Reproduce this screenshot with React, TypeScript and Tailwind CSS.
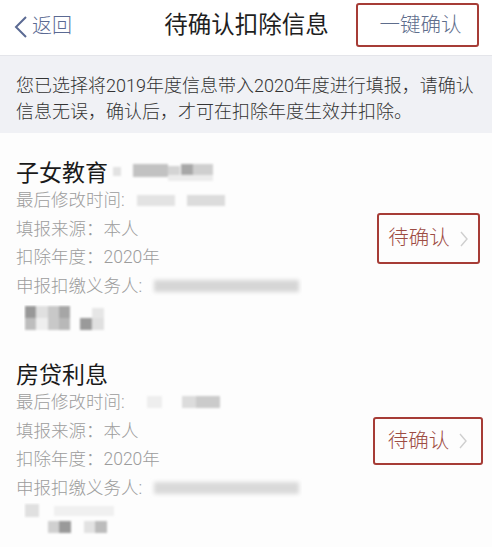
import React from 'react';

type Cell = [number, number, number, number, string];

// mosaic used to hide private data in the screenshot
const Mosaic = ({ w, h, cells, blur = 1.2 }: { w: number; h: number; cells: Cell[]; blur?: number }) => (
  <svg width={w} height={h} viewBox={`0 0 ${w} ${h}`} className="block shrink-0">
    <defs>
      <filter id={`b${w}${h}`} x="-20%" y="-50%" width="140%" height="200%">
        <feGaussianBlur stdDeviation={blur} />
      </filter>
    </defs>
    <g filter={`url(#b${w}${h})`}>
      {cells.map(([x, y, cw, ch, c], i) => (
        <rect key={i} x={x} y={y} width={cw} height={ch} fill={c} />
      ))}
    </g>
  </svg>
);

const Chevron = () => (
  <svg width="10" height="18" viewBox="0 0 10 18" className="shrink-0">
    <path d="M2 2 L8 9 L2 16" fill="none" stroke="#cfcfcf" strokeWidth="1.4" />
  </svg>
);

const Row = ({ label, value, children }: { label: string; value?: string; children?: React.ReactNode }) => (
  <div className="flex items-center h-[28.5px] text-[17.5px] font-light text-[#9c9c9c] whitespace-nowrap">
    <span>{label}</span>
    {value && <span>{value}</span>}
    {children}
  </div>
);

const PendingBox = ({ className }: { className: string }) => (
  <div
    className={`flex items-center justify-center gap-[9px] border-[2.5px] border-[#a63c36] rounded-[3px] text-[20.5px] font-light text-[#9d4c43] ${className}`}
  >
    <span>待确认</span>
    <Chevron />
  </div>
);

export default function App() {
  return (
    <div
      className="w-[492px] h-[547px] overflow-hidden bg-[#fdfdfd]"
      style={{ fontFamily: 'Roboto, "Noto Sans CJK SC", sans-serif' }}
    >
      {/* Nav bar */}
      <div className="flex h-[56px] bg-white border-b border-[#e4e5ea]">
        <div className="flex-1 flex items-center pl-[14px] text-[#5b6a93]">
          <svg width="14" height="22" viewBox="0 0 14 22" className="mr-[4px] mb-[2px]">
            <path d="M12 1 L2 11 L12 21" fill="none" stroke="#5b6a93" strokeWidth="2" />
          </svg>
          <span className="text-[20px] font-light leading-none mb-[3px]">返回</span>
        </div>
        <div className="flex items-center text-[23.5px] text-[#1f1f1f] whitespace-nowrap mb-[4px]">待确认扣除信息</div>
        <div className="flex-1 flex justify-end items-start pr-[13px] pt-[3px]">
          <div className="w-[123px] h-[44px] flex items-center justify-center pl-[6px] border-[2.5px] border-[#a63c36] rounded-[3px] text-[20.5px] font-light text-[#5e6d8c]">
            一键确认
          </div>
        </div>
      </div>

      {/* Notice */}
      <div className="bg-[#f0f1f5] px-[16px] pt-[17px] pb-[8px] text-[18px] font-light leading-[26px] text-[#333333] whitespace-nowrap">
        您已选择将2019年度信息带入2020年度进行填报，请确认
        <br />
        信息无误，确认后，才可在扣除年度生效并扣除。
      </div>

      {/* 子女教育 */}
      <div className="flex items-start pl-[16px] pr-[12px] pt-[24px]">
        <div className="flex-1">
          <div className="flex items-center h-[29px]">
            <span className="text-[23px] leading-[29px] mt-[4px] text-[#1a1a1a]">子女教育</span>
            <Mosaic
              w={115}
              h={22}
              cells={[
                [5, 6, 8, 9, '#e2e2e2'],
                [25, 3, 35, 13, '#c2c2c2'],
                [60, 5, 12, 11, '#d4d4d4'],
                [73, 3, 12, 13, '#a8a8a8'],
                [85, 3, 20, 13, '#cfcfcf'],
                [60, 14, 45, 6, '#ececec'],
              ]}
            />
          </div>
          <Row label="最后修改时间:">
            <Mosaic
              w={110}
              h={20}
              cells={[
                [12, 5, 38, 11, '#e3e3e3'],
                [62, 5, 38, 11, '#dcdcdc'],
              ]}
            />
          </Row>
          <Row label="填报来源：" value="本人" />
          <Row label="扣除年度：" value="2020年" />
          <Row label="申报扣缴义务人:">
            <Mosaic w={160} h={20} blur={2} cells={[[12, 4, 145, 12, '#d6d6d6']]} />
          </Row>
          <div className="mt-[5px] ml-[8px]">
            <Mosaic
              w={90}
              h={30}
              blur={0.8}
              cells={[
                [1, 1, 11, 12, '#989898'],
                [12, 1, 12, 12, '#e0e0e0'],
                [24, 1, 11, 12, '#c8c8c8'],
                [35, 1, 11, 12, '#a6a6a6'],
                [1, 13, 11, 12, '#bdbdbd'],
                [12, 13, 12, 12, '#eeeeee'],
                [24, 13, 11, 12, '#c8c8c8'],
                [35, 13, 11, 12, '#b8b8b8'],
                [56, 13, 12, 12, '#9a9a9a'],
                [68, 3, 12, 12, '#e6e6e6'],
                [68, 13, 12, 12, '#e0e0e0'],
              ]}
            />
          </div>
        </div>
        <PendingBox className="mt-[56px] w-[103px] h-[51px]" />
      </div>

      {/* 房贷利息 */}
      <div className="flex items-start pl-[16px] pr-[9px] pt-[24px]">
        <div className="flex-1">
          <div className="flex items-center h-[29px]">
            <span className="text-[23px] leading-[29px] mt-[4px] text-[#1a1a1a]">房贷利息</span>
          </div>
          <Row label="最后修改时间:">
            <Mosaic
              w={110}
              h={20}
              cells={[
                [22, 4, 15, 12, '#eeeeee'],
                [57, 4, 14, 12, '#dcdcdc'],
                [71, 4, 24, 12, '#cbcbcb'],
              ]}
            />
          </Row>
          <Row label="填报来源：" value="本人" />
          <Row label="扣除年度：" value="2020年" />
          <Row label="申报扣缴义务人:">
            <Mosaic w={160} h={20} blur={2} cells={[[12, 4, 145, 12, '#d9d9d9']]} />
          </Row>
          <div className="mt-[1px] ml-[8px]">
            <Mosaic
              w={100}
              h={36}
              blur={0.9}
              cells={[
                [1, 1, 14, 13, '#e0e0e0'],
                [30, 3, 60, 10, '#f0f0f0'],
                [24, 18, 11, 12, '#d0d0d0'],
                [35, 18, 12, 12, '#9a9a9a'],
                [60, 18, 11, 12, '#e2e2e2'],
                [71, 18, 12, 12, '#bcbcbc'],
              ]}
            />
          </div>
        </div>
        <PendingBox className="mt-[58px] w-[110px] h-[48px]" />
      </div>
    </div>
  );
}
